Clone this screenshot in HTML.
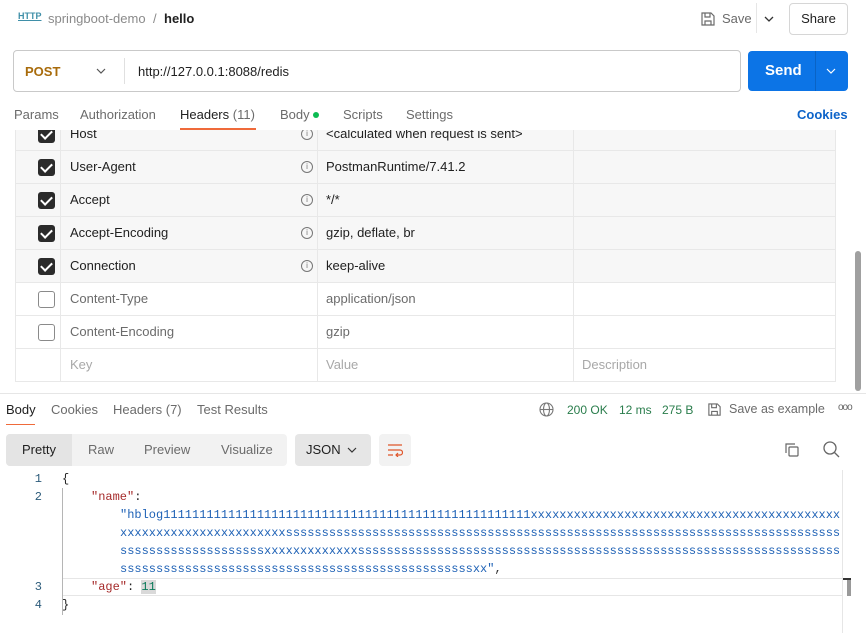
<!DOCTYPE html>
<html><head><meta charset="utf-8"><style>
*{box-sizing:border-box;margin:0;padding:0}
body{width:866px;height:633px;overflow:hidden;background:#fff;font-family:"Liberation Sans",Arial,sans-serif;font-size:13px;color:#212121;position:relative}
.a{position:absolute;white-space:nowrap}
.g{color:#6b6b6b}
.row{position:absolute;left:15px;width:821px;height:33px;border-bottom:1px solid #e8e8e8}
.row.c{background:#f7f7f7}
.row div{position:absolute;top:0;height:32px;line-height:32px}
.cb{position:absolute;left:22px;top:8px;width:17px;height:17px;border-radius:3px}
.cb.on{background:#2b2b2b}
.cb.on::after{content:"";position:absolute;left:5px;top:2px;width:5px;height:9px;border:solid #fff;border-width:0 2.2px 2.2px 0;transform:rotate(45deg)}
.cb.off{border:1.5px solid #8a8a8a;background:#fff}
.v1{left:44px;width:1px;background:#e8e8e8;height:33px!important}
.v2{left:301px;width:1px;background:#e8e8e8;height:33px!important}
.v3{left:557px;width:1px;background:#e8e8e8;height:33px!important}
.info{position:absolute;left:285px;top:10px;width:12px;height:12px;border:1px solid #777;border-radius:50%;font-size:8px;line-height:10px!important;text-align:center;color:#777}
.code{font-family:"Liberation Mono",monospace;font-size:12px}
.ln{position:absolute;left:30px;width:12px;text-align:right;color:#2c5b7a;font-family:"Liberation Mono",monospace;font-size:12px}
.str{color:#1f62b6}
.key{color:#a52a2a}
</style></head><body>
<div class="a" style="left:18px;top:11px;font-size:9px;font-weight:bold;color:#3f8fa8;text-decoration:underline">HTTP</div>
<div class="a" style="left:48px;top:11px;color:#8a8a8a">springboot-demo</div>
<div class="a" style="left:153px;top:11px;color:#8a8a8a">/</div>
<div class="a" style="left:164px;top:11px;font-weight:bold;color:#212121">hello</div>
<svg class="a" style="left:700px;top:11px" width="16" height="16" viewBox="0 0 16 16" fill="none" stroke="#6b6b6b" stroke-width="1.2"><path d="M2 2h9l3 3v9H2z"/><path d="M5 2v4h5V2M5 14v-4h6v4"/></svg>
<div class="a g" style="left:722px;top:11px">Save</div>
<div class="a" style="left:756px;top:3px;width:1px;height:30px;background:#e6e6e6"></div>
<svg class="a" style="left:764px;top:15px" width="10" height="8"><path d="M1 2l4 4 4-4" stroke="#333" fill="none" stroke-width="1.3"/></svg>
<div class="a" style="left:789px;top:3px;width:59px;height:32px;border:1px solid #d6d6d6;border-radius:4px;text-align:center;line-height:30px">Share</div>
<div class="a" style="left:13px;top:50px;width:728px;height:42px;border:1px solid #c9c9c9;border-radius:4px"></div>
<div class="a" style="left:25px;top:64px;font-weight:bold;color:#a86b0b">POST</div>
<svg class="a" style="left:96px;top:67px" width="10" height="8"><path d="M1 2l4 4 4-4" stroke="#555" fill="none" stroke-width="1.2"/></svg>
<div class="a" style="left:124px;top:58px;width:1px;height:26px;background:#e0e0e0"></div>
<div class="a" style="left:138px;top:64px">http://127.0.0.1:8088/redis</div>
<div class="a" style="left:748px;top:51px;width:100px;height:40px;background:#0c74e6;border-radius:4px"></div>
<div class="a" style="left:765px;top:62px;color:#fff;font-weight:bold;font-size:15px">Send</div>
<div class="a" style="left:815px;top:51px;width:1px;height:40px;background:#0a63c5"></div>
<svg class="a" style="left:826px;top:67px" width="10" height="8"><path d="M1 2l4 4 4-4" stroke="#fff" fill="none" stroke-width="1.2"/></svg>
<div class="a g" style="left:14px;top:107px">Params</div>
<div class="a g" style="left:80px;top:107px">Authorization</div>
<div class="a" style="left:180px;top:107px">Headers <span style="color:#6b6b6b">(11)</span></div>
<div class="a g" style="left:280px;top:107px">Body</div>
<div class="a" style="left:313px;top:112px;width:6px;height:6px;border-radius:50%;background:#0cbb52"></div>
<div class="a g" style="left:343px;top:107px">Scripts</div>
<div class="a g" style="left:406px;top:107px">Settings</div>
<div class="a" style="left:797px;top:107px;color:#0c63c9;font-weight:bold">Cookies</div>
<div style="position:absolute;left:0;top:130px;width:866px;height:262px;overflow:hidden">
<div class="row c" style="top:-12px;border-left:1px solid #e8e8e8;border-right:1px solid #e8e8e8"><span class="cb on"></span><div class="v1"></div><div style="left:54px">Host</div><span class="info">i</span><div class="v2"></div><div style="left:310px">&lt;calculated when request is sent&gt;</div><div class="v3"></div></div>
<div class="row c" style="top:21px;border-left:1px solid #e8e8e8;border-right:1px solid #e8e8e8"><span class="cb on"></span><div class="v1"></div><div style="left:54px">User-Agent</div><span class="info">i</span><div class="v2"></div><div style="left:310px">PostmanRuntime/7.41.2</div><div class="v3"></div></div>
<div class="row c" style="top:54px;border-left:1px solid #e8e8e8;border-right:1px solid #e8e8e8"><span class="cb on"></span><div class="v1"></div><div style="left:54px">Accept</div><span class="info">i</span><div class="v2"></div><div style="left:310px">*/*</div><div class="v3"></div></div>
<div class="row c" style="top:87px;border-left:1px solid #e8e8e8;border-right:1px solid #e8e8e8"><span class="cb on"></span><div class="v1"></div><div style="left:54px">Accept-Encoding</div><span class="info">i</span><div class="v2"></div><div style="left:310px">gzip, deflate, br</div><div class="v3"></div></div>
<div class="row c" style="top:120px;border-left:1px solid #e8e8e8;border-right:1px solid #e8e8e8"><span class="cb on"></span><div class="v1"></div><div style="left:54px">Connection</div><span class="info">i</span><div class="v2"></div><div style="left:310px">keep-alive</div><div class="v3"></div></div>
<div class="row" style="top:153px;border-left:1px solid #e8e8e8;border-right:1px solid #e8e8e8"><span class="cb off"></span><div class="v1"></div><div style="left:54px;color:#6b6b6b">Content-Type</div><div class="v2"></div><div style="left:310px;color:#6b6b6b">application/json</div><div class="v3"></div></div>
<div class="row" style="top:186px;border-left:1px solid #e8e8e8;border-right:1px solid #e8e8e8"><span class="cb off"></span><div class="v1"></div><div style="left:54px;color:#6b6b6b">Content-Encoding</div><div class="v2"></div><div style="left:310px;color:#6b6b6b">gzip</div><div class="v3"></div></div>
<div class="row" style="top:219px;border-left:1px solid #e8e8e8;border-right:1px solid #e8e8e8"><div class="v1"></div><div style="left:54px;color:#a8a8a8">Key</div><div class="v2"></div><div style="left:310px;color:#a8a8a8">Value</div><div class="v3"></div><div style="left:566px;color:#a8a8a8">Description</div></div>
</div>
<div class="a" style="left:180px;top:128px;width:76px;height:2px;background:#ef6a3a"></div>
<div class="a" style="left:855px;top:251px;width:6px;height:140px;background:#a0a0a0;border-radius:3px"></div>
<div class="a" style="left:0;top:393px;width:866px;height:1px;background:#e6e6e6"></div>
<div class="a" style="left:6px;top:402px">Body</div>
<div class="a" style="left:6px;top:424px;width:29px;height:1px;background:#ef6a3a"></div>
<div class="a g" style="left:51px;top:402px">Cookies</div>
<div class="a g" style="left:113px;top:402px">Headers (7)</div>
<div class="a g" style="left:197px;top:402px">Test Results</div>
<svg class="a" style="left:539px;top:402px" width="15" height="15" viewBox="0 0 15 15" fill="none" stroke="#777" stroke-width="1.1"><circle cx="7.5" cy="7.5" r="6.5"/><ellipse cx="7.5" cy="7.5" rx="3" ry="6.5"/><path d="M1 7.5h13"/></svg>
<div class="a" style="left:567px;top:403px;font-size:12px;color:#2a7d4c">200 OK</div>
<div class="a" style="left:619px;top:403px;font-size:12px;color:#2a7d4c">12 ms</div>
<div class="a" style="left:662px;top:403px;font-size:12px;color:#2a7d4c">275 B</div>
<svg class="a" style="left:707px;top:402px" width="15" height="15" viewBox="0 0 16 16" fill="none" stroke="#6b6b6b" stroke-width="1.2"><path d="M2 2h9l3 3v9H2z"/><path d="M5 2v4h5V2M5 14v-4h6v4"/></svg>
<div class="a g" style="left:729px;top:402px;font-size:12.5px">Save as example</div>
<div class="a" style="left:838px;top:402px;font-size:10px;color:#666;letter-spacing:-1px">ooo</div>
<div class="a" style="left:6px;top:434px;width:281px;height:32px;background:#f2f2f2;border-radius:4px"></div>
<div class="a" style="left:6px;top:434px;width:66px;height:32px;background:#e4e4e4;border-radius:4px 0 0 4px"></div>
<div class="a" style="left:22px;top:442px">Pretty</div>
<div class="a g" style="left:88px;top:442px">Raw</div>
<div class="a g" style="left:144px;top:442px">Preview</div>
<div class="a g" style="left:221px;top:442px">Visualize</div>
<div class="a" style="left:295px;top:434px;width:76px;height:32px;background:#e6e6e6;border-radius:4px"></div>
<div class="a" style="left:306px;top:442px">JSON</div>
<svg class="a" style="left:347px;top:446px" width="10" height="8"><path d="M1 2l4 4 4-4" stroke="#333" fill="none" stroke-width="1.2"/></svg>
<div class="a" style="left:379px;top:434px;width:32px;height:32px;background:#f2f2f2;border-radius:4px"></div>
<svg class="a" style="left:387px;top:443px" width="16" height="14" viewBox="0 0 16 14" fill="none" stroke="#e0552a" stroke-width="1.2"><path d="M1 2h14M1 7h12a2.5 2.5 0 010 5H9M11 10l-2 2 2 2M1 12h5"/></svg>
<svg class="a" style="left:784px;top:442px" width="16" height="16" viewBox="0 0 16 16" fill="none" stroke="#666" stroke-width="1.2"><path d="M2 11V2h9"/><rect x="5" y="5" width="9" height="9" rx="1"/></svg>
<svg class="a" style="left:823px;top:441px" width="17" height="17" viewBox="0 0 17 17" fill="none" stroke="#666" stroke-width="1.3"><circle cx="7" cy="7" r="6"/><path d="M11.5 11.5l4.5 4.5"/></svg>
<div class="a" style="left:842px;top:470px;width:1px;height:163px;background:#e6e6e6"></div>
<div class="a" style="left:62px;top:578px;width:780px;height:18px;border-top:1px solid #e6e6e6;border-bottom:1px solid #e6e6e6"></div>
<div class="a" style="left:843px;top:578px;width:8px;height:2px;background:#333"></div>
<div class="a" style="left:847px;top:580px;width:4px;height:16px;background:#9a9a9a"></div>
<div class="a" style="left:62px;top:488px;width:1px;height:127px;background:#b5b5b5"></div>
<div class="ln" style="top:472px">1</div>
<div class="ln" style="top:490px">2</div>
<div class="ln" style="top:580px">3</div>
<div class="ln" style="top:598px">4</div>
<div class="a code" style="left:62px;top:472px">{</div>
<div class="a code" style="left:91px;top:490px"><span class="key">"name"</span>:</div>
<div class="a code str" style="left:120px;top:508px">"hblog111111111111111111111111111111111111111111111111111xxxxxxxxxxxxxxxxxxxxxxxxxxxxxxxxxxxxxxxxxxx</div>
<div class="a code str" style="left:120px;top:526px">xxxxxxxxxxxxxxxxxxxxxxxsssssssssssssssssssssssssssssssssssssssssssssssssssssssssssssssssssssssssssss</div>
<div class="a code str" style="left:120px;top:544px">ssssssssssssssssssssxxxxxxxxxxxxxsssssssssssssssssssssssssssssssssssssssssssssssssssssssssssssssssss</div>
<div class="a code str" style="left:120px;top:562px">sssssssssssssssssssssssssssssssssssssssssssssssssxx"<span style="color:#333">,</span></div>
<div class="a code" style="left:91px;top:580px"><span class="key">"age"</span>: <span style="color:#0b7a5a;background:#d9d9d9">11</span></div>
<div class="a code" style="left:62px;top:598px">}</div>
</body></html>
